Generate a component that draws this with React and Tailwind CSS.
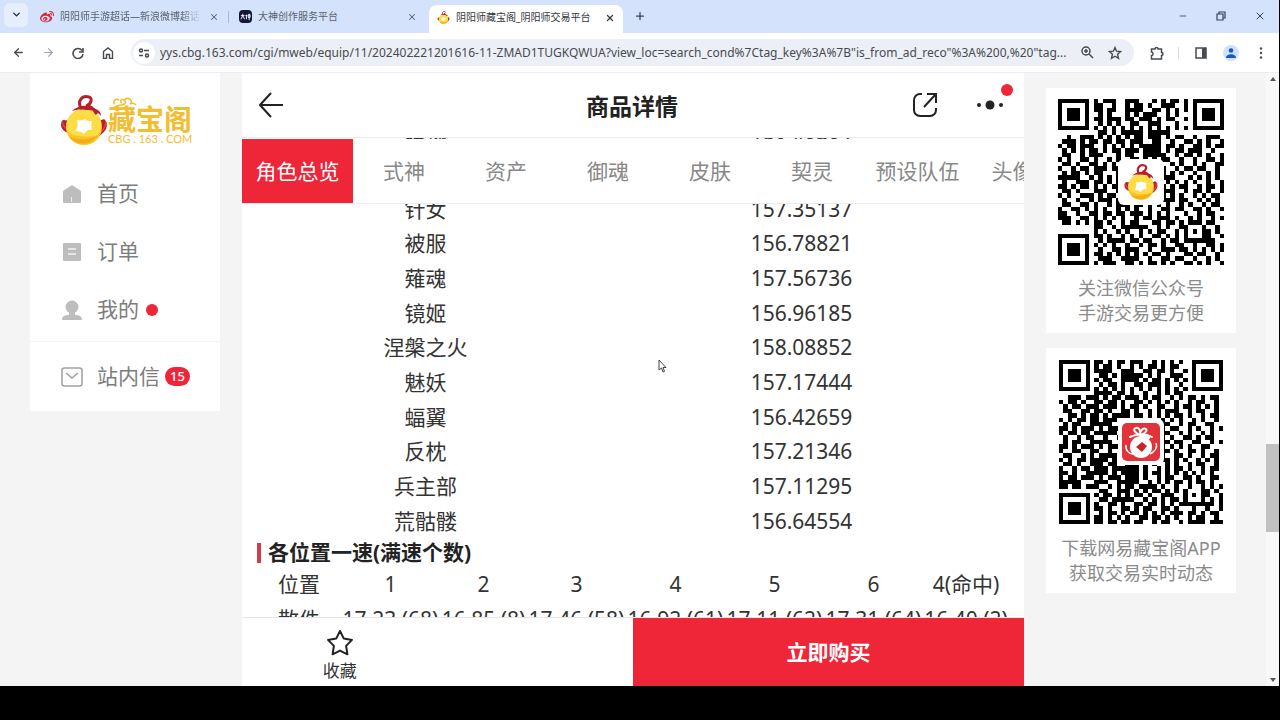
import React, { useState } from 'react';
import { FaWeibo } from 'react-icons/fa';
import { ArrowLeft, ArrowRight, ChevronDown, Minus, Plus, X } from 'lucide-react';

const speedRows = [
  ['破势', '158.43637'],
  ['\u00a0', '\u00a0'],
  ['针女', '157.35137'],
  ['被服', '156.78821'],
  ['薙魂', '157.56736'],
  ['镜姬', '156.96185'],
  ['涅槃之火', '158.08852'],
  ['魅妖', '157.17444'],
  ['蝠翼', '156.42659'],
  ['反枕', '157.21346'],
  ['兵主部', '157.11295'],
  ['荒骷髅', '156.64554'],
];

const positionHead = ['位置', '1', '2', '3', '4', '5', '6', '4(命中)'];
const positionRow = ['散件', '17.23 (68)', '16.85 (8)', '17.46 (58)', '16.92 (61)', '17.11 (62)', '17.31 (64)', '16.40 (2)'];

const sections = ['式神', '资产', '御魂', '皮肤', '契灵', '预设队伍', '头像框'];

const wechatQr = [
  '#######.#.###..###...#.#.##.#.#######',
  '#.....#.##..#..#.##.#..###..#.#.....#',
  '#.###.#.##.##..####..##.#.#.#.#.###.#',
  '#.###.#..#.#...#.#.###..#.#...#.###.#',
  '#.###.#.##.###.##.###.#.##..#.#.###.#',
  '#.....#..#.#.#..##..###...#...#.....#',
  '#######.#.#.#.#.#.#.#.#.#.#.#.#######',
  '.........##.#.#####.#####............',
  '..#..###.#.#.#.#.##.###.#.##..#..###.',
  '.###.#.##.##.##.###..##..#..##.#.#..#',
  '#.##.###..#.#.#.#.#####.##.#..##.#.##',
  '.#.#.#.##.#.##.###.####.#.##.###..#..',
  '.##..#.###...#.##..#####..#.##.#.#..#',
  '#.#..##.#..#.#..##.#.#.##..#..#..##.#',
  '.##.#..##.#.#.##.........#.#..#.#..##',
  '#..#.##.###.##.........#..#.##.##..#.',
  '.#.##.#.##...#.........#.#.#..#..#.#.',
  '#####..#.#.#.#.........###...#.#.#.#.',
  '.#..###.##.#.#..........#.#.#.#..#..#',
  '##.#.##.#.#.##.........#.#.##..#.##.#',
  '.##.#...###..#.........###..#.##.#..#',
  '#.#..###.#.##..........#.#.#..#.#.##.',
  '.#..#..#.###.#.........###.##..#.#.#.',
  '.##..##.#..#.###.##.#.#.#..#.#..#.##.',
  '#..##.#.#.#..#.#.#..#..##.##..##.#..#',
  '##..#..##.##.##.###.#.#.#...#..#.##..',
  '###..##.#.#.#.#..#.##.###.#..#.#..#.#',
  '.##.#.#.##.#..#.##...##.##.#.###.##..',
  '........##..#.######..#.#..##...#..#.',
  '#######.#.#..#.#..#.#.##..#.#.#.##.#.',
  '#.....#.##.#..#.#.#..##.#.#.#...##..#',
  '#.###.#..#.####.##.##..#.##.#######..',
  '#.###.#.#.#.#..#..#.##.#..##..#..##.#',
  '#.###.#..#..##.###..#..###.##.#.#.#.#',
  '#.....#.##.#.#.#.#.#.##.#...##.##..#.',
  '#######..###..####..#..##.##..#..#.#.',
  '........#.###..##.#.##.#.#..##.#.#..#',
];

const appQr = [
  '#######.##.#.##.###..#.#.#.#..#######',
  '#.....#.#.##.#..#.#.##.#.##...#.....#',
  '#.###.#.####..###..##.##.#..#.#.###.#',
  '#.###.#..##.#.#####.#.#..###..#.###.#',
  '#.###.#.#.##..####.#.##.#.#.#.#.###.#',
  '#.....#..#.##.#..##.###.#..#..#.....#',
  '#######.#.#.#.#.#.#.#.#.#.#.#.#######',
  '........####.##.#..#..#.#.##.........',
  '..###.###.#.##.###.#.##..#.#.##.#.##.',
  '#.##.#..##.##.#..##.#.#.#.#..#.##..#.',
  '.#.##.###.###.#.##.#..##..#.##.#.#.#.',
  '.##..##.##.#..##.#..#.#.###..#.##..#.',
  '..##.#.##.#.####.##.#.#.#.##.#..#.##.',
  '#.#.##.##.###..........#.#.#..#.#..#.',
  '.#.##..#####...........##..#.##..##..',
  '##.#.###.#.###.........#.##..#.#..#.#',
  '#.##.##.#####..........##..#.#..#.#..',
  '.#..#.##..#..#.........#.#..##.#.##..',
  '.#.##..#####...........##.##..##..#.#',
  '##.#.###.#.###.........#.#.#.#..##...',
  '#..##..##..#...........##.#..##.#..#.',
  '.##..#.#.####..........#..##.#..#.##.',
  '#.#.##.####.#..........##.#.#..#.#.#.',
  '.##.#..###.##..###.#.#..#.#..#.##..#.',
  '#..#.##.###.######.#..#.#.##.#..#.##.',
  '##.#..#####.#.####.#.##.#.#.#.#.#.#..',
  '#.##.###.#.###.###.#..#.##..##.#..##.',
  '#####...###..#####..#.#.#.##.#.##.#..',
  '##.##.###..#.#.##.####.#..#..#..#.#.#',
  '.........##..###.#.#.##.#.#.#...##.#.',
  '#######.#.##.#.#.##.#..###..#.#.##..#',
  '#.....#..##.#####..#.#.#.##.#...#.#.#',
  '#.###.#.#..##.#..##.##.#.#.########.#',
  '#.###.#.##.#..##.#.##..##.#...#..#..#',
  '#.###.#..#.##.#.##.#.#.#.###.##.#.##.',
  '#.....#.##.#.#.#..##.##.#.#..#.##..#.',
  '#######.##.##.##.##..#.##..#.####.###',
];

function Qr({ rows, label, className }) {
  // the bottom-left finder is always the last 7 rows
  const finder = (r, c) => {
    const y = r >= 30 ? r - 30 : r;
    const x = c >= 30 ? c - 30 : c;
    const ring = Math.max(Math.abs(x - 3), Math.abs(y - 3));
    return ring !== 2 && ring < 4;
  };
  const inFinder = (r, c) => (r < 8 && (c < 8 || c > 28)) || (r > 28 && c < 8);
  let d = '';
  rows.forEach((row, r) => {
    for (let c = 0; c < 37; c++) {
      const on = inFinder(r, c) ? finder(r, c) : row[c] === '#';
      if (on) d += `M${c} ${r}h1v1h-1z`;
    }
  });
  return (
    <svg viewBox="0 0 37 37" role="img" aria-label={label} className={className} shapeRendering="crispEdges">
      <path d={d} fill="#000" />
    </svg>
  );
}

function Coin({ className }) {
  return (
    <svg viewBox="0 0 48 50" className={className} aria-hidden="true">
      <path d="M3 25C-1 29 1 36 9 38l4-12zM44 24c5 4 4 13-7 18l-3-14z" fill="#b81f2c" />
      <path d="M2 27c2 6 5 8 9 9M46 27c-1 7-5 11-9 13" fill="none" stroke="#e8404a" strokeWidth="1.5" />
      <circle cx="24" cy="32" r="18" fill="#f9c51f" />
      <path d="M7 26c4-11 17-15 27-9 9 5 9 16 4 23-6 3-26 2-30-3-2-4-2-8-1-11z" fill="#fddc45" />
      <path d="M9 42c7 9 22 9 29-2-8 5-20 6-29 2z" fill="#f3ad1a" />
      <path d="M12 16c5-5 15-7 21-3 4 1 8 3 8 8-4-5-9-6-15-6-6-1-10 0-14 1z" fill="#b81f2c" />
      <path d="M21 13C17 6 22 0 29 2c4 1 2 8-3 9 4 0 8 3 10 7" fill="none" stroke="#b81f2c" strokeWidth="3" strokeLinecap="round" />
      <path d="M17 25c4 1 6 0 8-1 1 2 4 2 7 2-1 4-1 6 0 9-4-1-6 1-8 4-2-2-5-3-9-3 3-3 3-7 2-11z" fill="#fff" />
    </svg>
  );
}

function AppBadge({ className }) {
  return (
    <svg viewBox="0 0 38 38" className={className} aria-hidden="true">
      <rect width="38" height="38" rx="5" fill="#e2323a" />
      <path d="M4 22c-1 5 3 9 7 9M34 20c2 5-2 9-6 11" fill="none" stroke="#fff" strokeWidth="1.5" />
      <circle cx="19" cy="24" r="11" fill="#fff" />
      <path d="M8 14c6-3 15-4 22 0M18 12c-5-2-8-6-4-7 3-1 5 3 4 7 0-4 3-8 6-6 2 2-2 5-6 6l9 3" fill="none" stroke="#fff" strokeWidth="2" strokeLinecap="round" />
      <path d="M20 19l5 4-5 6-6-5z" fill="#c9242e" />
    </svg>
  );
}

function TabStrip() {
  return (
    <div className="flex h-[33px] items-end bg-[#d5e2fc] text-[10px] text-[#5a6270]">
      <button aria-label="搜索标签页" className="mb-1 ml-1 flex h-6 w-6 items-center justify-center self-center rounded-md bg-[#e6eefd]">
        <ChevronDown size={11} strokeWidth={3} className="text-gray-800" />
      </button>
      <div className="flex h-[33px] w-[200px] items-center pl-3">
        <FaWeibo size={14} className="shrink-0 text-[#d52b3a]" />
        <span className="ml-[6px] w-[141px] overflow-hidden whitespace-nowrap [mask-image:linear-gradient(90deg,#000_86%,transparent)]">阴阳师手游超话—新浪微博超话</span>
        <button aria-label="关闭标签页" className="ml-2"><X size={10} strokeWidth={2.5} /></button>
      </div>
      <div className="mb-[10px] h-3 w-px bg-[#a9b8d4]" />
      <div className="flex h-[33px] w-[200px] items-center pl-[10px]">
        <span className="flex h-[13px] w-[13px] shrink-0 items-center justify-center rounded-sm bg-[#12173a]">
          <svg viewBox="0 0 12 12" className="h-[11px] w-[11px]" fill="none" stroke="#fff" strokeWidth="1">
            <path d="M1 5h4M3 3v2l-2 4M3 5l2 4M7 4v5M6 5h2M9 4h2v3H9zM10 3v7" />
          </svg>
        </span>
        <span className="ml-[6px] flex-1 whitespace-nowrap">大神创作服务平台</span>
        <button aria-label="关闭标签页" className="mr-3"><X size={10} strokeWidth={2.5} /></button>
      </div>
      <div className="flex h-7 w-[194px] items-center rounded-t-lg bg-white pb-[3px] pl-2 text-[#33373d]">
        <Coin className="h-[13px] w-[13px] shrink-0" />
        <span className="ml-[6px] flex-1 whitespace-nowrap">阴阳师藏宝阁_阴阳师交易平台</span>
        <button aria-label="关闭标签页" className="mr-2"><X size={10} strokeWidth={3} /></button>
      </div>
      <button aria-label="新标签页" className="mb-[11px] ml-[11px] text-gray-700"><Plus size={12} strokeWidth={2.5} /></button>
      <div className="mb-[11px] ml-auto flex items-center gap-7 pr-[13px] text-gray-700">
        <button aria-label="最小化"><Minus size={10} strokeWidth={2} /></button>
        <button aria-label="还原">
          <svg viewBox="0 0 10 10" className="h-[10px] w-[10px]" fill="none" stroke="currentColor" strokeWidth="1.2">
            <path d="M1 3h6v6H1zM3 3V1h6v6H7" />
          </svg>
        </button>
        <button aria-label="关闭"><X size={12} strokeWidth={2} /></button>
      </div>
    </div>
  );
}

function Toolbar() {
  const [url, setUrl] = useState('yys.cbg.163.com/cgi/mweb/equip/11/202402221201616-11-ZMAD1TUGKQWUA?view_loc=search_cond%7Ctag_key%3A%7B"is_from_ad_reco"%3A%200,%20"tag...');
  return (
    <div className="flex h-[39px] items-center bg-white pl-3 pr-4 text-[#474b50]">
      <button aria-label="后退"><ArrowLeft size={13} strokeWidth={2.4} /></button>
      <button aria-label="前进" className="ml-[17px] text-gray-400"><ArrowRight size={13} strokeWidth={2} /></button>
      <button aria-label="刷新" className="ml-[17px]">
        <svg viewBox="0 0 12 12" className="h-3 w-3" fill="none" stroke="currentColor" strokeWidth="1.6">
          <path d="M10 3.500A5 5 0 1 0 11 7M11 1v4H7" />
        </svg>
      </button>
      <button aria-label="主页" className="ml-[18px]">
        <svg viewBox="0 0 12 12" className="h-3 w-3" fill="none" stroke="currentColor" strokeWidth="1.4">
          <path d="M1.500 4.500L6 1l4.500 3.500v7H7.500V7.500h-3v4h-3z" />
        </svg>
      </button>
      <div className="ml-[17px] flex h-[27px] min-w-0 flex-1 items-center rounded-full bg-[#edeff7] pr-3">
        <button aria-label="网站信息" className="ml-[2px] flex h-[22px] w-[22px] shrink-0 items-center justify-center rounded-full bg-white">
          <svg viewBox="0 0 12 10" className="h-[10px] w-3" fill="none" stroke="currentColor" strokeWidth="1.5">
            <circle cx="3" cy="2.500" r="1.500" /><path d="M6 2.500h5M1 7.500h4" /><circle cx="9" cy="7.500" r="1.500" />
          </svg>
        </button>
        <input aria-label="地址栏" value={url} onChange={(e) => setUrl(e.target.value)} className="ml-[5px] min-w-0 flex-1 bg-transparent text-[12px] outline-none" />
        <button aria-label="缩放" className="ml-[6px]">
          <svg viewBox="0 0 13 13" className="h-[13px] w-[13px]" fill="none" stroke="currentColor" strokeWidth="1.5">
            <circle cx="5" cy="5" r="4" /><path d="M8 8l4 4M3 5h4M5 3v4" />
          </svg>
        </button>
        <button aria-label="收藏此页" className="ml-[14px]">
          <svg viewBox="0 0 14 14" className="h-[14px] w-[14px]" fill="none" stroke="currentColor" strokeWidth="1.400">
            <path d="M7 1.500l1.600 3.700 4 .4-3 2.700.9 4L7 10.200l-3.500 2.100.9-4-3-2.700 4-.4z" />
          </svg>
        </button>
      </div>
      <button aria-label="扩展程序" className="ml-4">
        <svg viewBox="0 0 14 14" className="h-[14px] w-[14px]" fill="none" stroke="currentColor" strokeWidth="1.500">
          <path d="M1.500 3h3.500a1.500 1.500 0 0 1 3 0h3.500v3.500a1.500 1.500 0 0 1 0 3V13h-10V9.500c2 0 2-3.500 0-3.500z" />
        </svg>
      </button>
      <div className="ml-[14px] h-3 w-px bg-[#d5dcec]" />
      <button aria-label="侧边栏" className="ml-4">
        <svg viewBox="0 0 12 12" className="h-3 w-3">
          <path d="M1 1h10v10H1z" fill="none" stroke="currentColor" strokeWidth="1.500" /><path d="M7 1h4v10H7z" fill="currentColor" />
        </svg>
      </button>
      <button aria-label="个人资料" className="ml-4 flex h-4 w-4 items-center justify-center rounded-full bg-[#d0e1fb]">
        <svg viewBox="0 0 10 10" className="h-[10px] w-[10px]" fill="#1b56c4"><circle cx="5" cy="2.500" r="2.300" /><path d="M0 10c0-5 10-5 10 0z" /></svg>
      </button>
      <button aria-label="更多" className="ml-5">
        <svg viewBox="0 0 4 12" className="h-3 w-1" fill="currentColor"><circle cx="2" cy="1.500" r="1.200" /><circle cx="2" cy="6" r="1.200" /><circle cx="2" cy="10.500" r="1.200" /></svg>
      </button>
    </div>
  );
}

function Sidebar() {
  return (
    <aside className="w-[190px] shrink-0 text-[21px] text-[#7d7d7d]">
      <div className="h-[268px] bg-white pl-[30px]">
        <a href="#" className="flex items-start pt-[22px]">
          <Coin className="h-[50px] w-12" />
          <span className="flex flex-col pt-[9px] text-[#f2bd2f]">
            <span className="relative text-[28px] font-bold leading-[30px]">
              藏宝阁
              <svg viewBox="0 0 26 12" className="absolute -top-[7px] left-[3px] h-3 w-[26px]" fill="none" stroke="currentColor" strokeWidth="1.500">
                <path d="M1 11c4 0 5-3 9-3s6-3 3-5-5 2-2 3M8 3c-4-2-7 2-4 4M13 3c4-4 10 1 6 4 2-1 4-1 6 1" />
              </svg>
            </span>
            <span className="font-['Lato'] text-[11px] leading-[10px]">CBG . 163 . COM</span>
          </span>
        </a>
        <a href="#" className="mt-5 flex h-[58px] items-center">
          <svg viewBox="0 0 24 20" className="h-5 w-6" fill="#bdbdbd"><path d="M3 7l9-6 9 6v11a1 1 0 0 1-1 1H4a1 1 0 0 1-1-1z" /><path d="M11 13h1v5h-1z" fill="#eee" /></svg>
          <span className="ml-[13px]">首页</span>
        </a>
        <a href="#" className="flex h-[58px] items-center">
          <svg viewBox="0 0 24 20" className="h-5 w-6" fill="#bdbdbd"><rect x="3" y="1" width="18" height="18" rx="1" /><path d="M8 7h8M8 12h8" stroke="#f3f3f3" strokeWidth="1.500" /></svg>
          <span className="ml-[13px]">订单</span>
        </a>
        <a href="#" className="flex h-[58px] items-center">
          <svg viewBox="0 0 24 20" className="h-5 w-6" fill="#bdbdbd"><circle cx="12" cy="7" r="6.500" /><path d="M9 11h6v4c4 0 7 1 7 5H2c0-4 3-5 7-5z" /></svg>
          <span className="ml-[13px]">我的</span>
          <i className="ml-[7px] h-3 w-3 rounded-full bg-[#ee2637]" />
        </a>
      </div>
      <a href="#" className="mt-px flex h-[69px] items-center bg-white pl-[30px]">
        <svg viewBox="0 0 24 20" className="h-5 w-6" fill="none" stroke="#a3a3a3" strokeWidth="1.600"><rect x="2" y="1" width="20" height="18" rx="2.500" /><path d="M6 6l6 5 6-5" /></svg>
        <span className="ml-[13px]">站内信</span>
        <b className="ml-[5px] flex h-[19px] w-[25px] items-center justify-center rounded-full bg-[#ee2637] text-[13px] font-medium text-white">15</b>
      </a>
    </aside>
  );
}

function QrCard({ rows, lines, label, size, children }) {
  return (
    <section className="flex h-[245px] flex-col items-center bg-white pt-[11px]">
      <div className="relative">
        <Qr rows={rows} label={label} className={size} />
        <div className="absolute inset-0 m-auto flex h-[46px] w-[46px] items-center justify-center rounded-md bg-white">{children}</div>
      </div>
      <p className="mt-[11px] text-center text-[18px] leading-[25px] text-[#8b8b8b]">
        {lines[0]}<br />{lines[1]}
      </p>
    </section>
  );
}

function Detail() {
  return (
    <main className="flex w-[782px] shrink-0 flex-col bg-white">
      <header className="grid h-[65px] grid-cols-3 items-center border-b border-[#ececec] pl-[17px] pr-[19px]">
        <button aria-label="返回" className="justify-self-start">
          <svg viewBox="0 0 24 26" className="h-[26px] w-6" fill="none" stroke="#222" strokeWidth="2"><path d="M12 1L1 13l11 12M1 13h23" /></svg>
        </button>
        <h1 className="pt-[2px] text-center text-[23px] font-bold text-[#222]">商品详情</h1>
        <div className="flex items-center gap-[38px] justify-self-end">
          <button aria-label="分享">
            <svg viewBox="0 0 24 24" className="h-6 w-6" fill="none" stroke="#222" strokeWidth="2"><path d="M9 1H7a6 6 0 0 0-6 6v10a6 6 0 0 0 6 6h10a6 6 0 0 0 6-6v-2M14 1h9v9M22.500 1.500L11 14" /></svg>
          </button>
          <button aria-label="更多操作" className="relative">
            <svg viewBox="0 0 30 24" className="h-6 w-[30px]" fill="#222"><circle cx="4" cy="12" r="2" /><circle cx="15" cy="12" r="4.500" /><circle cx="26" cy="12" r="2" /></svg>
            <i className="absolute -right-2 -top-[9px] h-3 w-3 rounded-full bg-[#ee2637]" />
          </button>
        </div>
      </header>

      <div className="min-h-0 flex-1 overflow-hidden text-[21px] text-[#333]">
        <nav className="relative z-10 mt-px flex h-[65px] overflow-hidden border-b border-[#ececec] bg-white text-[#888]">
          <button className="w-[111px] shrink-0 bg-[#ee2637] pt-[2px] text-white">角色总览</button>
          {sections.map((name) => (
            <button key={name} className={name.length > 3 ? 'w-[109px] shrink-0 pt-[2px]' : 'w-[102px] shrink-0 pt-[2px]'}>{name}</button>
          ))}
        </nav>
        <table className="-mt-[82px] h-[416px] w-full table-fixed text-center leading-[30px]">
          <tbody>
            {speedRows.map(([name, speed], i) => (
              <tr key={i}>
                <td className="p-0 pr-[24px]">{name}</td>
                <td className="p-0 pr-[54px]">{speed}</td>
              </tr>
            ))}
          </tbody>
        </table>
        <h2 className="flex h-[29px] items-center pl-[15px] font-bold text-[#222]">
          <i className="mr-[7px] h-5 w-1 bg-[#cf3d4c]" />各位置一速(满速个数)
        </h2>
        <table className="ml-[15px] w-[752px] table-fixed whitespace-nowrap text-center leading-[35px]">
          <colgroup>
            <col className="w-[84px]" /><col className="w-[99px]" /><col className="w-[87px]" /><col className="w-[99px]" />
            <col className="w-[99px]" /><col className="w-[99px]" /><col className="w-[99px]" /><col className="w-[86px]" />
          </colgroup>
          <thead>
            <tr>{positionHead.map((cell) => <th key={cell} className="p-0 font-normal">{cell}</th>)}</tr>
          </thead>
          <tbody>
            <tr>{positionRow.map((cell) => <td key={cell} className="p-0">{cell}</td>)}</tr>
          </tbody>
        </table>
      </div>

      <footer className="flex h-[69px] border-t border-[#e6e6e6]">
        <div className="flex flex-1">
          <button className="flex w-1/2 flex-col items-center pt-[11px] text-[17px] leading-6 text-[#333]">
            <svg viewBox="0 0 28 28" className="h-7 w-7" fill="none" stroke="#222" strokeWidth="2" strokeLinejoin="round">
              <path d="M14 2l3.800 7.600 8.200 1.300-5.900 6 1.300 8.400L14 21.600l-7.400 3.700 1.300-8.400-5.900-6 8.200-1.300z" />
            </svg>
            <span className="mt-[2px]">收藏</span>
          </button>
        </div>
        <button className="flex-1 bg-[#ee2637] pt-[2px] text-[21px] font-bold text-white">立即购买</button>
      </footer>
    </main>
  );
}

export default function App() {
  return (
    <div className="flex h-screen flex-col overflow-hidden bg-black font-['Noto_Sans','Noto_Sans_CJK_SC',sans-serif]">
      <div className="mr-px flex min-h-0 flex-1 flex-col bg-[#f4f4f4]">
        <TabStrip />
        <Toolbar />
        <div className="flex min-h-0 flex-1 border-t border-[#ebedf2]">
          <div className="flex min-w-0 flex-1 justify-center gap-[22px] overflow-hidden">
            <Sidebar />
            <Detail />
            <aside className="flex w-[190px] shrink-0 flex-col gap-[15px] pt-[15px]">
              <QrCard rows={wechatQr} label="微信公众号二维码" size="h-[166px] w-[166px]" lines={['关注微信公众号', '手游交易更方便']}>
                <Coin className="h-9 w-9" />
              </QrCard>
              <QrCard rows={appQr} label="藏宝阁APP二维码" size="h-[166px] w-[164px]" lines={['下载网易藏宝阁APP', '获取交易实时动态']}>
                <AppBadge className="h-[38px] w-[38px]" />
              </QrCard>
            </aside>
          </div>
          <div className="flex w-[13px] shrink-0 flex-col items-center justify-between bg-[#f8f8f8] py-1">
            <i className="border-x-[3px] border-b-4 border-x-transparent border-b-[#555]" />
            <i className="mt-[216px] h-[88px] w-full bg-[#c1c1c1]" />
            <i className="border-x-[3px] border-t-4 border-x-transparent border-t-[#555]" />
          </div>
        </div>
      </div>
      <div className="h-[34px] shrink-0 bg-black" />
      <svg viewBox="0 0 9 14" className="pointer-events-none absolute left-[658px] top-[359px] h-[14px] w-[9px]">
        <path d="M1 1v10l2.500-2 1.500 4 1.500-.6L5 8.500h3z" fill="#fff" stroke="#444" strokeWidth="1" />
      </svg>
    </div>
  );
}
